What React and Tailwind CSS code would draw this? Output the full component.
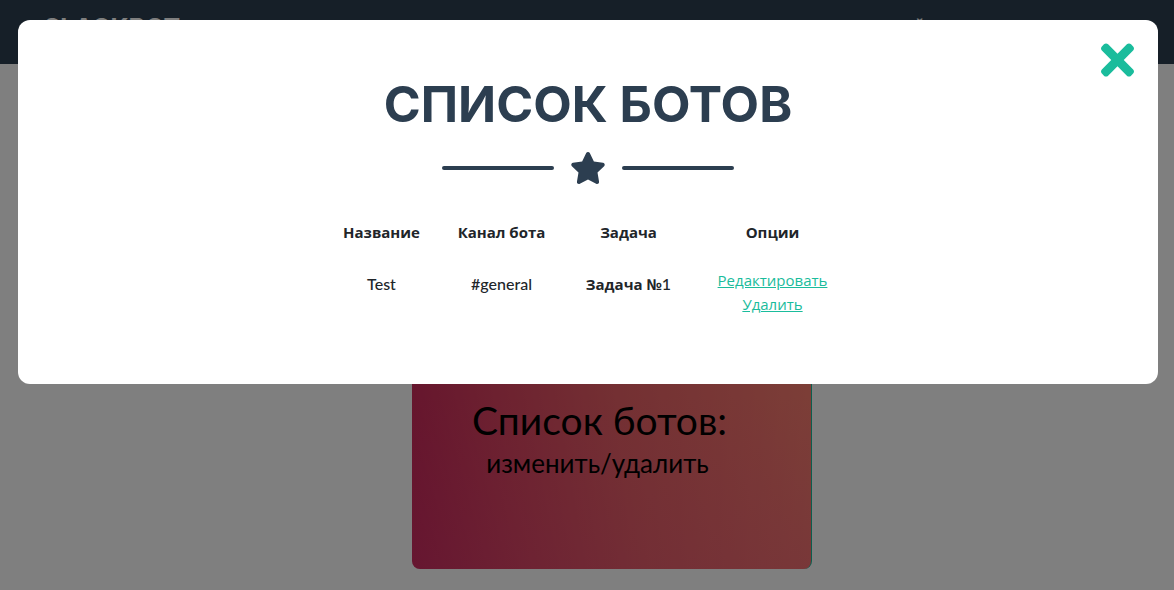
import { FaStar, FaTimes } from "react-icons/fa";

const bots = [{ name: "Test", channel: "#general", task: "Задача №", number: 1 }];

function Navbar() {
  return (
    <nav className="flex h-16 items-start justify-between bg-[#2c3e50] px-11 text-white">
      <a href="#top" className="mt-3 font-['Inter'] text-[25px] leading-8 font-bold">
        SLACKBOT
      </a>
      <a href="#bots" className="mt-4 mr-[204px] font-['Inter'] text-base leading-6 font-bold">
        МОЙ
      </a>
    </nav>
  );
}

function BotsCard() {
  return (
    <section className="flex justify-center pt-[216px] pl-[50px]">
      <a
        href="#bots"
        className="block w-[400px] overflow-hidden rounded-lg border-r border-[#1abc9c] bg-[linear-gradient(to_bottom,transparent_40%,#e0508033_100%),linear-gradient(80deg,#c8245a_0%,#da4260_25%,#e86066_52%,#f2706c_78%,#fa8070_100%)] pt-[118px] pb-[85px] text-center font-['Lato'] text-black"
      >
        <p className="pr-6 text-[39px] leading-[44px]">Список ботов:</p>
        <p className="pr-7 text-[26px] leading-[42px]">изменить/удалить</p>
      </a>
    </section>
  );
}

function Divider() {
  return (
    <div className="mt-5 flex items-center justify-center gap-4 text-[#2c3e50]">
      <span className="h-1 w-28 rounded-full bg-[#2c3e50]" />
      <FaStar className="h-8 w-9" />
      <span className="h-1 w-28 rounded-full bg-[#2c3e50]" />
    </div>
  );
}

function BotsTable() {
  return (
    <table className="mx-auto mt-6 table-fixed text-center font-['Open_Sans','Noto_Sans',sans-serif] text-base leading-6 text-[#212529]">
      <thead>
        <tr>
          <th className="w-[115px] py-3 text-[15px] font-bold">Название</th>
          <th className="w-[125px] py-3 text-[15px] font-bold">Канал бота</th>
          <th className="w-[129px] py-3 text-[15px] font-bold">Задача</th>
          <th className="w-[159px] py-3 text-[15px] font-bold">Опции</th>
        </tr>
      </thead>
      <tbody>
        {bots.map((bot) => (
          <tr key={bot.name}>
            <td className="pt-3 pb-7 font-['Lato'] font-medium">{bot.name}</td>
            <td className="pt-3 pb-7 font-['Lato'] font-medium">{bot.channel}</td>
            <td className="pt-3 pb-7 text-[15px]">
              <b>{bot.task}</b>
              <span className="font-['Lato'] text-base font-medium">{bot.number}</span>
            </td>
            <td className="py-3 text-[15px] text-[#1abc9c]">
              <a href="#edit" className="block underline">Редактировать</a>
              <a href="#delete" className="block underline">Удалить</a>
            </td>
          </tr>
        ))}
      </tbody>
    </table>
  );
}

function BotsModal() {
  return (
    <div className="fixed inset-0 overflow-hidden bg-black/50 pt-5 pr-4 pl-[18px]">
      <div
        role="dialog"
        aria-modal="true"
        aria-labelledby="bots-title"
        className="relative mx-auto max-w-[1140px] rounded-xl bg-white pt-14 pb-14"
      >
        <button type="button" aria-label="Закрыть" className="absolute top-4 right-6 text-[#1abc9c]">
          <FaTimes className="h-12 w-[33px]" />
        </button>
        <h2 id="bots-title" className="text-center font-['Inter'] text-[50px] leading-[56px] font-bold text-[#2c3e50]">
          СПИСОК БОТОВ
        </h2>
        <Divider />
        <BotsTable />
      </div>
    </div>
  );
}

export default function App() {
  return (
    <div className="h-screen overflow-hidden bg-white">
      <Navbar />
      <BotsCard />
      <BotsModal />
    </div>
  );
}
